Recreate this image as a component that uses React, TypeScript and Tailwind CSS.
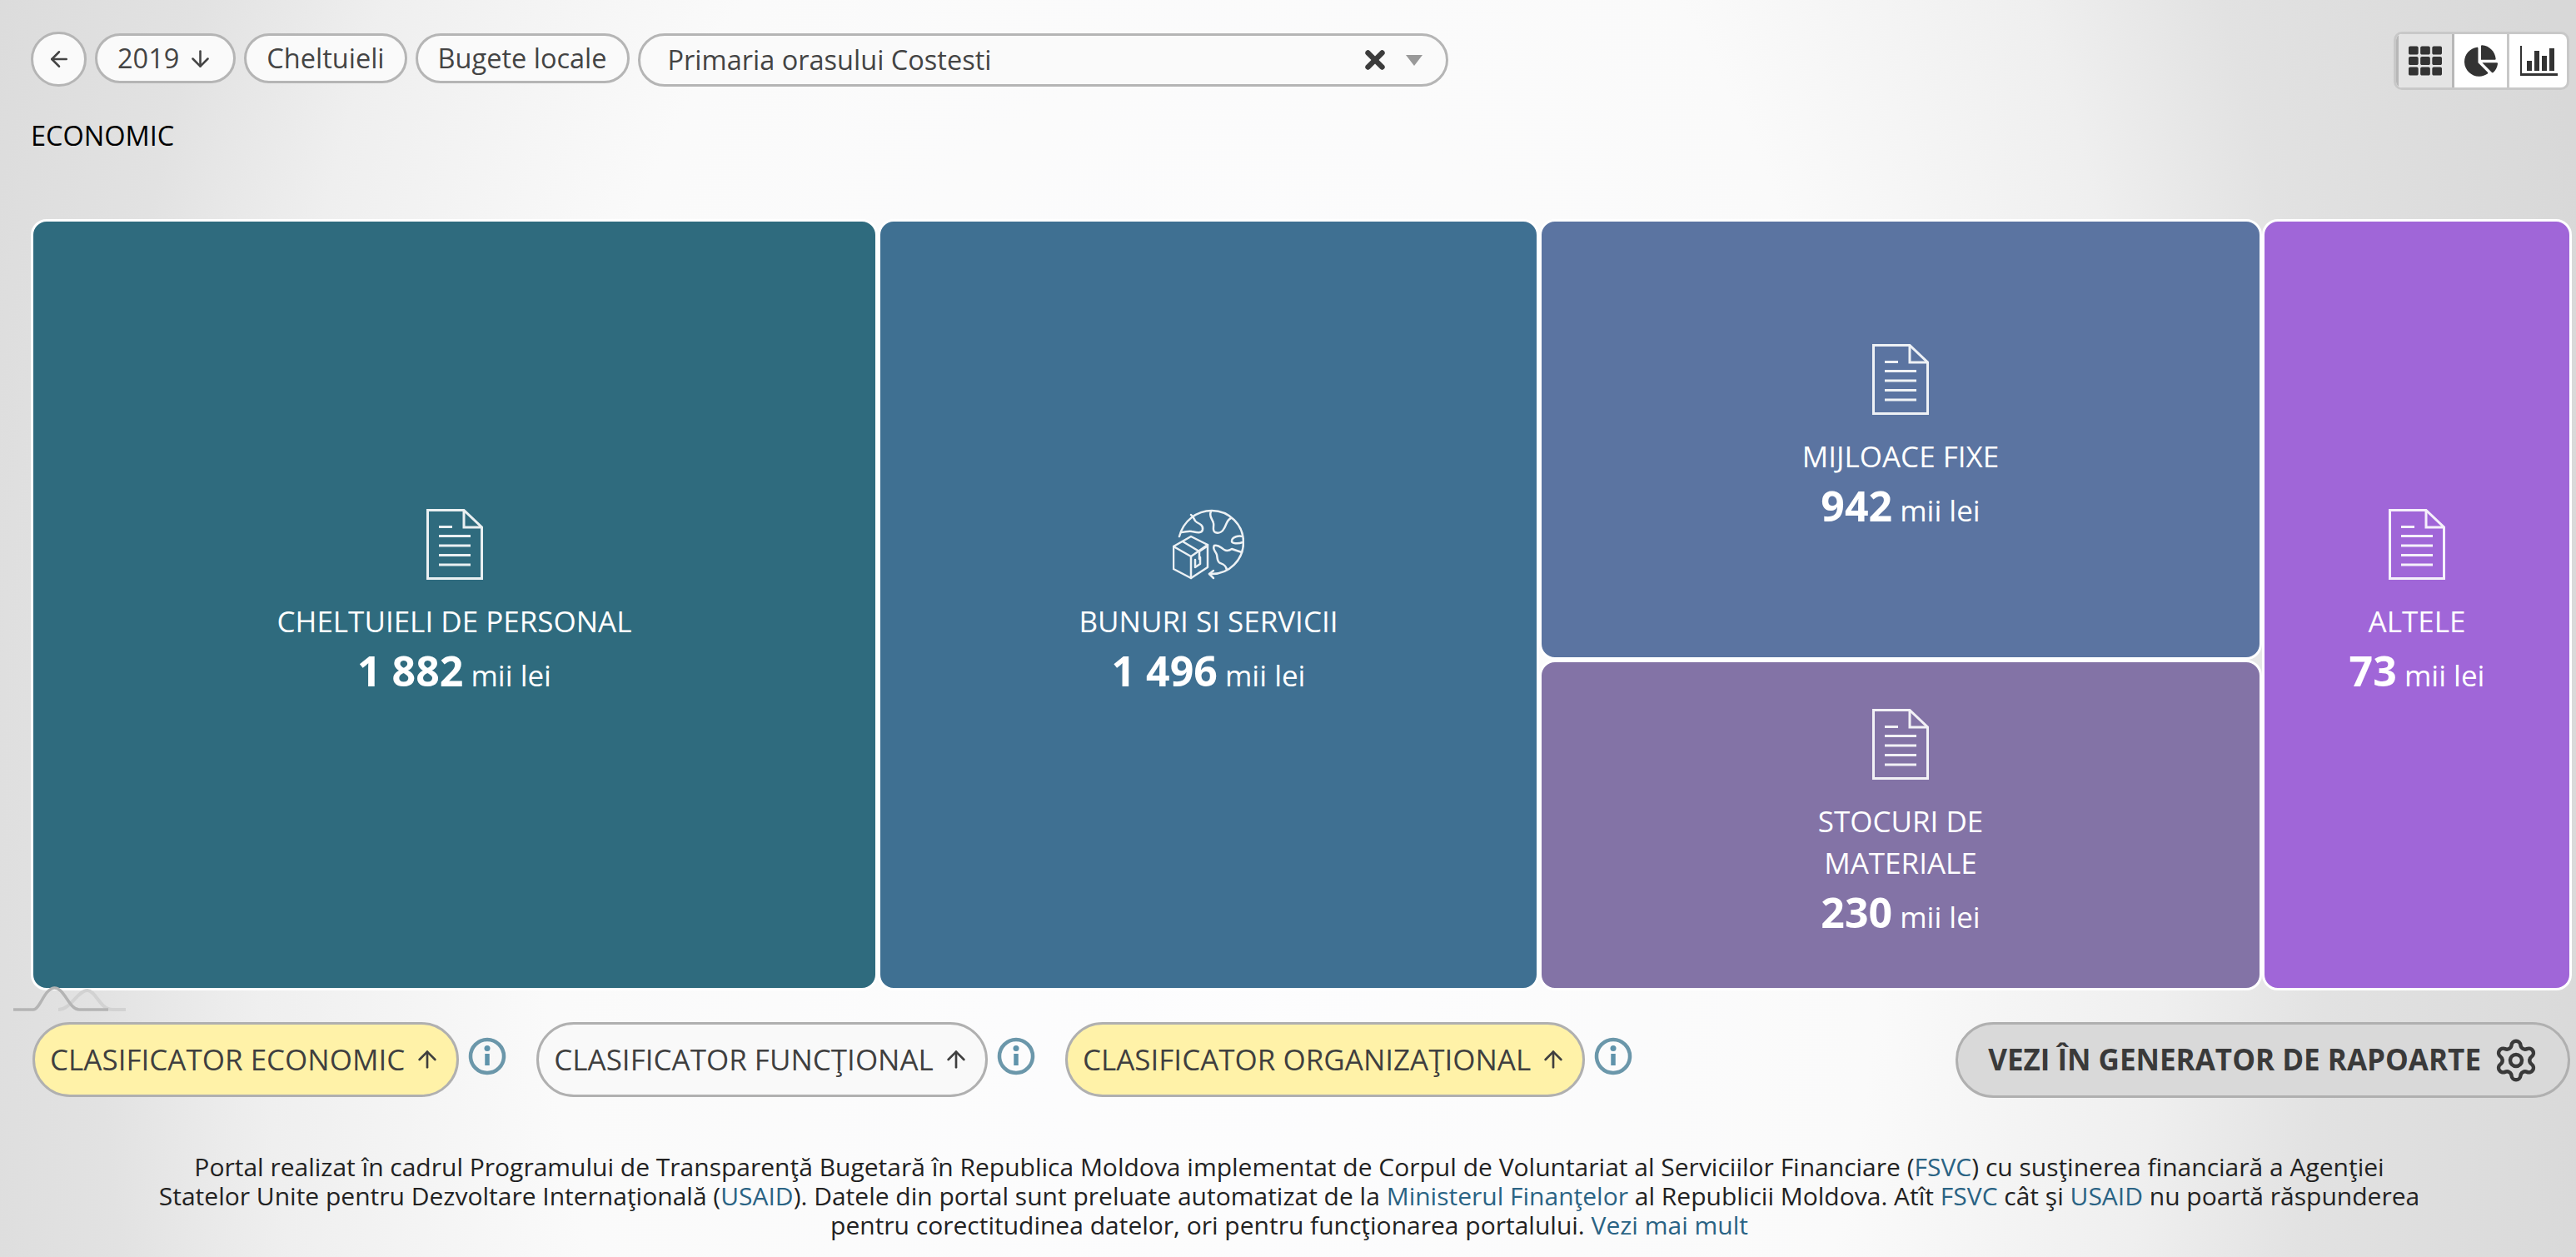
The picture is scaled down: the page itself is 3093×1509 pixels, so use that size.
import React from "react";
import { ArrowLeft, ArrowDown, ArrowUp, X, Settings } from "lucide-react";
import { FaTh, FaChartPie } from "react-icons/fa";

const font = { fontFamily: '"Open Sans", "Noto Sans", sans-serif' };

function DocIcon() {
  return (
    <svg width="68" height="85" viewBox="0 0 68 85" fill="none" stroke="currentColor" strokeWidth="3" className="opacity-90">
      <path d="M1.500 1.500H45L66.500 22V83.500H1.500Z" />
      <path d="M45 1.500V22H66.500" />
      <path d="M15 21.500H31M15 32.500H53M15 44H53M15 55.500H53M15 67H53" />
    </svg>
  );
}

function GlobeIcon() {
  return (
    <svg width="86" height="85" viewBox="0 0 86 85" fill="none" stroke="currentColor" strokeWidth="2.500" strokeLinejoin="round" strokeLinecap="round" className="opacity-90">
      <path d="M8 33C13 14 29 2 47 2c21 0 38 17 38 38 0 21-17 38-38 38H44" />
      <path d="M49 74l-5 4 5 5" />
      <path d="M22 7c4 2 3 7 7 9 4 2 8 4 7 9-1 5-8 3-13 2-4-1-8 1-13 1" />
      <path d="M46 3c-3 6 2 9 3 14 1 4-2 9 2 11 5 2 9-1 11-5 2-3 3-10 8-12" />
      <path d="M84 33c-5-1-12 0-13 5-1 4 8 4 13 2" />
      <path d="M50 44c5-2 8 3 12 5 3 2 6 1 9-1l12 4" />
      <path d="M50 44c-3 4 2 7 3 11 1 4 0 8 4 10 3 1 7 2 8 8" />
      <path d="M22 33L1 45v27l21 11 20-13V43Z" />
      <path d="M1 45l21 12 20-14M22 57v26" />
      <path d="M12 39l20 12v9M32 51l9-6" />
      <path d="M27 61v9l6-4v-8" />
    </svg>
  );
}

function InfoIcon() {
  return (
    <svg width="46" height="46" viewBox="0 0 46 46" fill="none" className="mt-[18px] ml-[11px] shrink-0">
      <circle cx="23" cy="23" r="20" stroke="#6b97aa" strokeWidth="4.500" />
      <circle cx="23" cy="13.500" r="3.500" fill="#5f93ab" />
      <path d="M23 20v14" stroke="#5f93ab" strokeWidth="5.500" />
    </svg>
  );
}

function Tile({ className, label, value, icon }: { className: string; label: React.ReactNode; value: string; icon: React.ReactNode }) {
  return (
    <div className={`flex flex-col items-center justify-center border-[3px] border-white rounded-[19px] pt-[8px] text-white text-center ${className}`}>
      {icon}
      <div className="mt-[25px] text-[35px] leading-[50px]">{label}</div>
      <div className="mt-[3px] leading-[62px] whitespace-nowrap">
        <span className="text-[50px] font-bold">{value}</span>
        <span className="text-[35px]"> mii lei</span>
      </div>
    </div>
  );
}

function Classifier({ label, active }: { label: string; active: boolean }) {
  return (
    <div className={`flex items-center h-[90px] rounded-full border-[3px] border-[#b0b0b0] pl-[18px] pr-[19px] text-[35px] text-[#3f3f3f] whitespace-nowrap ${active ? "bg-[#fff2a8]" : "bg-[#f9f9f9]"}`}>
      {label}
      <ArrowUp size={32} strokeWidth={2} className="ml-[11px]" />
    </div>
  );
}

function Pill({ children }: { children: React.ReactNode }) {
  return (
    <div className="flex items-center h-[60px] mt-[2px] rounded-full border-[3px] border-[#b5b5b5] bg-[#fafafa] px-[24px] text-[32.5px] text-[#444] whitespace-nowrap">
      {children}
    </div>
  );
}

const A = ({ children }: { children: React.ReactNode }) => <span className="text-[#2a6384]">{children}</span>;

export default function App() {
  return (
    <div
      style={font}
      className="relative w-[3093px] h-[1509px] overflow-hidden bg-[radial-gradient(ellipse_58%_200%_at_47%_65%,#fdfdfe_0%,#fafafa_45%,#efefef_64%,#e2e2e2_75%,#d8d8d8_95%)]"
    >
      <div className="pl-[37px] pr-[8px] pt-[38px]">
        <div className="flex items-start justify-between h-[70px]">
          <div className="flex items-start gap-[10px]">
            <div className="flex items-center justify-center w-[67px] h-[66px] rounded-full border-[3px] border-[#b5b5b5] bg-[#fafafa] text-[#444]">
              <ArrowLeft size={30} strokeWidth={2} />
            </div>
            <Pill>
              2019
              <ArrowDown size={31} strokeWidth={2} className="ml-[10px]" />
            </Pill>
            <Pill>Cheltuieli</Pill>
            <Pill>Bugete locale</Pill>
            <div className="flex items-center w-[973px] h-[64px] mt-[2px] rounded-full border-[3px] border-[#b5b5b5] bg-[#fafafa] pl-[33px] pr-[28px] text-[32.5px] text-[#444]">
              <span className="flex-1">Primaria orasului Costesti</span>
              <X size={34} strokeWidth={4.500} className="text-[#3c3c3c] mr-[20px]" />
              <svg width="20" height="13" viewBox="0 0 20 13"><path d="M0 0h20L10 13Z" fill="#999" /></svg>
            </div>
          </div>
          <div className="flex h-[70px] rounded-[10px] border-[3px] border-[#c8c8c8] bg-white text-[#333] overflow-hidden">
            <div className="flex items-center justify-center w-[70px] bg-[#e4e4e4] border-r-[3px] border-l-[3px] border-[#b8b8b8]">
              <FaTh size={40} />
            </div>
            <div className="flex items-center justify-center w-[66px] border-r-[3px] border-[#c8c8c8]">
              <FaChartPie size={40} />
            </div>
            <div className="flex items-center justify-center w-[69px]">
              <svg width="46" height="36" viewBox="0 0 46 36" fill="currentColor">
                <path d="M1 0h2v33h43v3H1Z" />
                <rect x="9" y="18" width="6" height="12" />
                <rect x="18" y="6" width="6" height="24" />
                <rect x="27" y="12" width="6" height="18" />
                <rect x="36" y="3" width="6" height="27" />
              </svg>
            </div>
          </div>
        </div>
        <div className="mt-[33px] text-[32.5px] leading-[44px] text-black">ECONOMIC</div>
      </div>

      <div className="flex h-[926px] mt-[78px] ml-[37px] mr-[5px]">
        <Tile className="w-[1017px] bg-[#2f6b7e]" label="CHELTUIELI DE PERSONAL" value="1 882" icon={<DocIcon />} />
        <Tile className="w-[794px] bg-[#3f7092]" label="BUNURI SI SERVICII" value="1 496" icon={<GlobeIcon />} />
        <div className="flex flex-col w-[868px]">
          <Tile className="h-[529px] bg-[#5b74a1]" label="MIJLOACE FIXE" value="942" icon={<DocIcon />} />
          <Tile
            className="flex-1 bg-[#8373a6]"
            label={<>STOCURI DE<br />MATERIALE</>}
            value="230"
            icon={<DocIcon />}
          />
        </div>
        <Tile className="flex-1 bg-[#a066d8]" label="ALTELE" value="73" icon={<DocIcon />} />
      </div>

      <svg width="136" height="34" viewBox="0 0 136 34" fill="none" className="absolute left-[15px] top-[1181px]">
        <path d="M55 31C70 31 78 8 90 8c10 0 15 23 30 23h16" stroke="#d2d2d2" strokeWidth="4" />
        <path d="M1 31h24C33 31 38 6 50 5c12-1 18 26 30 26h35" stroke="#b4b4b4" strokeWidth="3.500" />
      </svg>

      <div className="flex mt-[38px] pl-[39px] pr-[7px]">
        <div className="flex">
          <Classifier label="CLASIFICATOR ECONOMIC" active />
          <InfoIcon />
        </div>
        <div className="flex ml-[36px]">
          <Classifier label="CLASIFICATOR FUNCŢIONAL" active={false} />
          <InfoIcon />
        </div>
        <div className="flex ml-[36px]">
          <Classifier label="CLASIFICATOR ORGANIZAŢIONAL" active />
          <InfoIcon />
        </div>
        <div className="ml-auto flex items-center h-[91px] rounded-full border-[3px] border-[#b0b0b0] bg-[#d9d9d9] pl-[36px] pr-[34px] text-[35px] font-bold text-[#3a3a3a] whitespace-nowrap">
          VEZI ÎN GENERATOR DE RAPOARTE
          <Settings size={56} strokeWidth={1.900} className="ml-[14px]" />
        </div>
      </div>

      <div className="mt-[65px] pl-[3px] text-center text-[30px] leading-[35px] text-[#222]">
        <div>
          Portal realizat în cadrul Programului de Transparenţă Bugetară în Republica Moldova implementat de Corpul de Voluntariat al Serviciilor Financiare (<A>FSVC</A>) cu susţinerea financiară a Agenţiei
        </div>
        <div>
          Statelor Unite pentru Dezvoltare Internaţională (<A>USAID</A>). Datele din portal sunt preluate automatizat de la <A>Ministerul Finanţelor</A> al Republicii Moldova. Atît <A>FSVC</A> cât şi <A>USAID</A> nu poartă răspunderea
        </div>
        <div>
          pentru corectitudinea datelor, ori pentru funcţionarea portalului. <A>Vezi mai mult</A>
        </div>
      </div>
    </div>
  );
}
